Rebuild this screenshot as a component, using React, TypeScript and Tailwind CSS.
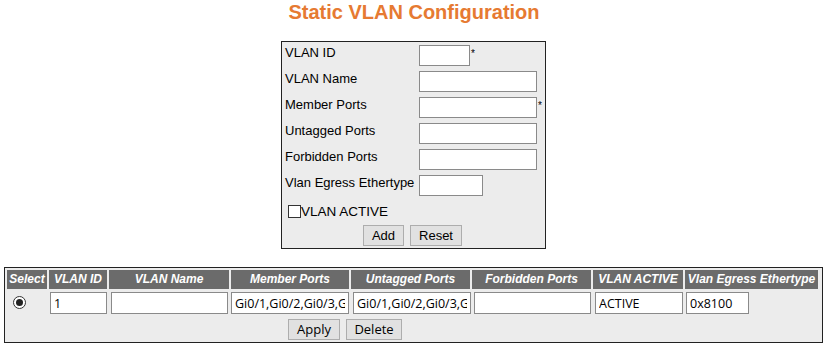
import { useState } from "react";

const formRows = [
  { label: "VLAN ID", width: "w-[51px]", star: true },
  { label: "VLAN Name", width: "w-[118px]", star: false },
  { label: "Member Ports", width: "w-[118px]", star: true },
  { label: "Untagged Ports", width: "w-[118px]", star: false },
  { label: "Forbidden Ports", width: "w-[118px]", star: false },
  { label: "Vlan Egress Ethertype", width: "w-[64px]", star: false },
];

const headers = [
  "Select",
  "VLAN ID",
  "VLAN Name",
  "Member Ports",
  "Untagged Ports",
  "Forbidden Ports",
  "VLAN ACTIVE",
  "Vlan Egress Ethertype",
];

const btn =
  "h-[21px] px-[6px] bg-[#e1e1e1] border border-[#adadad] text-[13px] leading-none text-black";

export default function App() {
  const [active, setActive] = useState(false);

  return (
    <div className="w-[828px] h-[347px] bg-white font-['Liberation_Sans',Arial,sans-serif] text-black overflow-hidden">
      <h1 className="pt-[1px] text-center text-[20px] leading-[23px] font-bold text-[#e67a32]">
        Static VLAN Configuration
      </h1>

      <div className="ml-[281px] mt-[17px] w-[265px] h-[208px] border border-[#222] bg-[#ececec] pl-[3px] pt-[3px]">
        <div className="grid grid-cols-[134px_auto] gap-y-[5px]">
          {formRows.map((r) => (
            <div key={r.label} className="contents">
              <div className="text-[13px] leading-[15px] whitespace-nowrap">{r.label}</div>
              <div className="flex items-start">
                <input
                  className={`${r.width} h-[21px] border border-[#8a8a8a] bg-white`}
                />
                {r.star && <span className="text-[10px] leading-[12px] ml-[1px] mt-[3px]">*</span>}
              </div>
            </div>
          ))}
        </div>
        <label className="flex items-center mt-[8px] ml-[3px] text-[13.5px] leading-[15px]">
          <span
            onClick={() => setActive(!active)}
            className="w-[13px] h-[13px] border border-[#333] bg-white flex items-center justify-center text-[10px]"
          >
            {active ? "✓" : ""}
          </span>
          VLAN ACTIVE
        </label>
        <div className="flex gap-[6px] mt-[6px] ml-[78px]">
          <button className={`${btn} w-[41px]`}>Add</button>
          <button className={`${btn} w-[52px]`}>Reset</button>
        </div>
      </div>

      <div className="ml-[4px] mt-[18px] w-[819px] h-[76px] border border-[#222] bg-[#ececec] p-[2px]">
        <div className="grid grid-cols-[40px_58px_120px_118px_119px_119px_90px_133px] gap-x-[2px]">
          {headers.map((h) => (
            <div
              key={h}
              className="h-[19px] bg-[#6b6b6b] text-white italic font-bold text-[12px] leading-[19px] text-center whitespace-nowrap overflow-hidden"
            >
              {h}
            </div>
          ))}
        </div>
        <div className="grid grid-cols-[40px_58px_120px_118px_119px_119px_90px_133px] gap-x-[2px] mt-[3px] font-['Open_Sans',sans-serif] text-[12.5px]">
          <div className="flex justify-start pl-[6px] pt-[4px]">
            <span className="w-[13px] h-[13px] rounded-full border border-[#333] bg-white flex items-center justify-center">
              <span className="w-[7px] h-[7px] rounded-full bg-[#222]" />
            </span>
          </div>
          <div>
            <input defaultValue="1" className="ml-[1px] w-[57px] h-[22px] border border-[#8a8a8a] bg-white px-[3px]" />
          </div>
          <div>
            <input className="ml-[2px] w-[117px] h-[22px] border border-[#8a8a8a] bg-white px-[3px]" />
          </div>
          <div>
            <input
              defaultValue="Gi0/1,Gi0/2,Gi0/3,Gi0/4,Gi0/5"
              className="w-[118px] h-[22px] border border-[#8a8a8a] bg-white px-[3px]"
            />
          </div>
          <div>
            <input
              defaultValue="Gi0/1,Gi0/2,Gi0/3,Gi0/4,Gi0/5"
              className="ml-[2px] w-[118px] h-[22px] border border-[#8a8a8a] bg-white px-[3px]"
            />
          </div>
          <div>
            <input className="ml-[2px] w-[117px] h-[22px] border border-[#8a8a8a] bg-white px-[3px]" />
          </div>
          <div>
            <input defaultValue="ACTIVE" className="ml-[2px] w-[88px] h-[22px] border border-[#8a8a8a] bg-white px-[3px]" />
          </div>
          <div>
            <input defaultValue="0x8100" className="ml-[1px] w-[63px] h-[22px] border border-[#8a8a8a] bg-white px-[3px]" />
          </div>
        </div>
        <div className="flex gap-[6px] mt-[5px] ml-[281px]">
          <button className={`${btn} w-[52px] font-['Open_Sans',sans-serif]`}>Apply</button>
          <button className={`${btn} w-[56px] font-['Open_Sans',sans-serif]`}>Delete</button>
        </div>
      </div>
    </div>
  );
}
